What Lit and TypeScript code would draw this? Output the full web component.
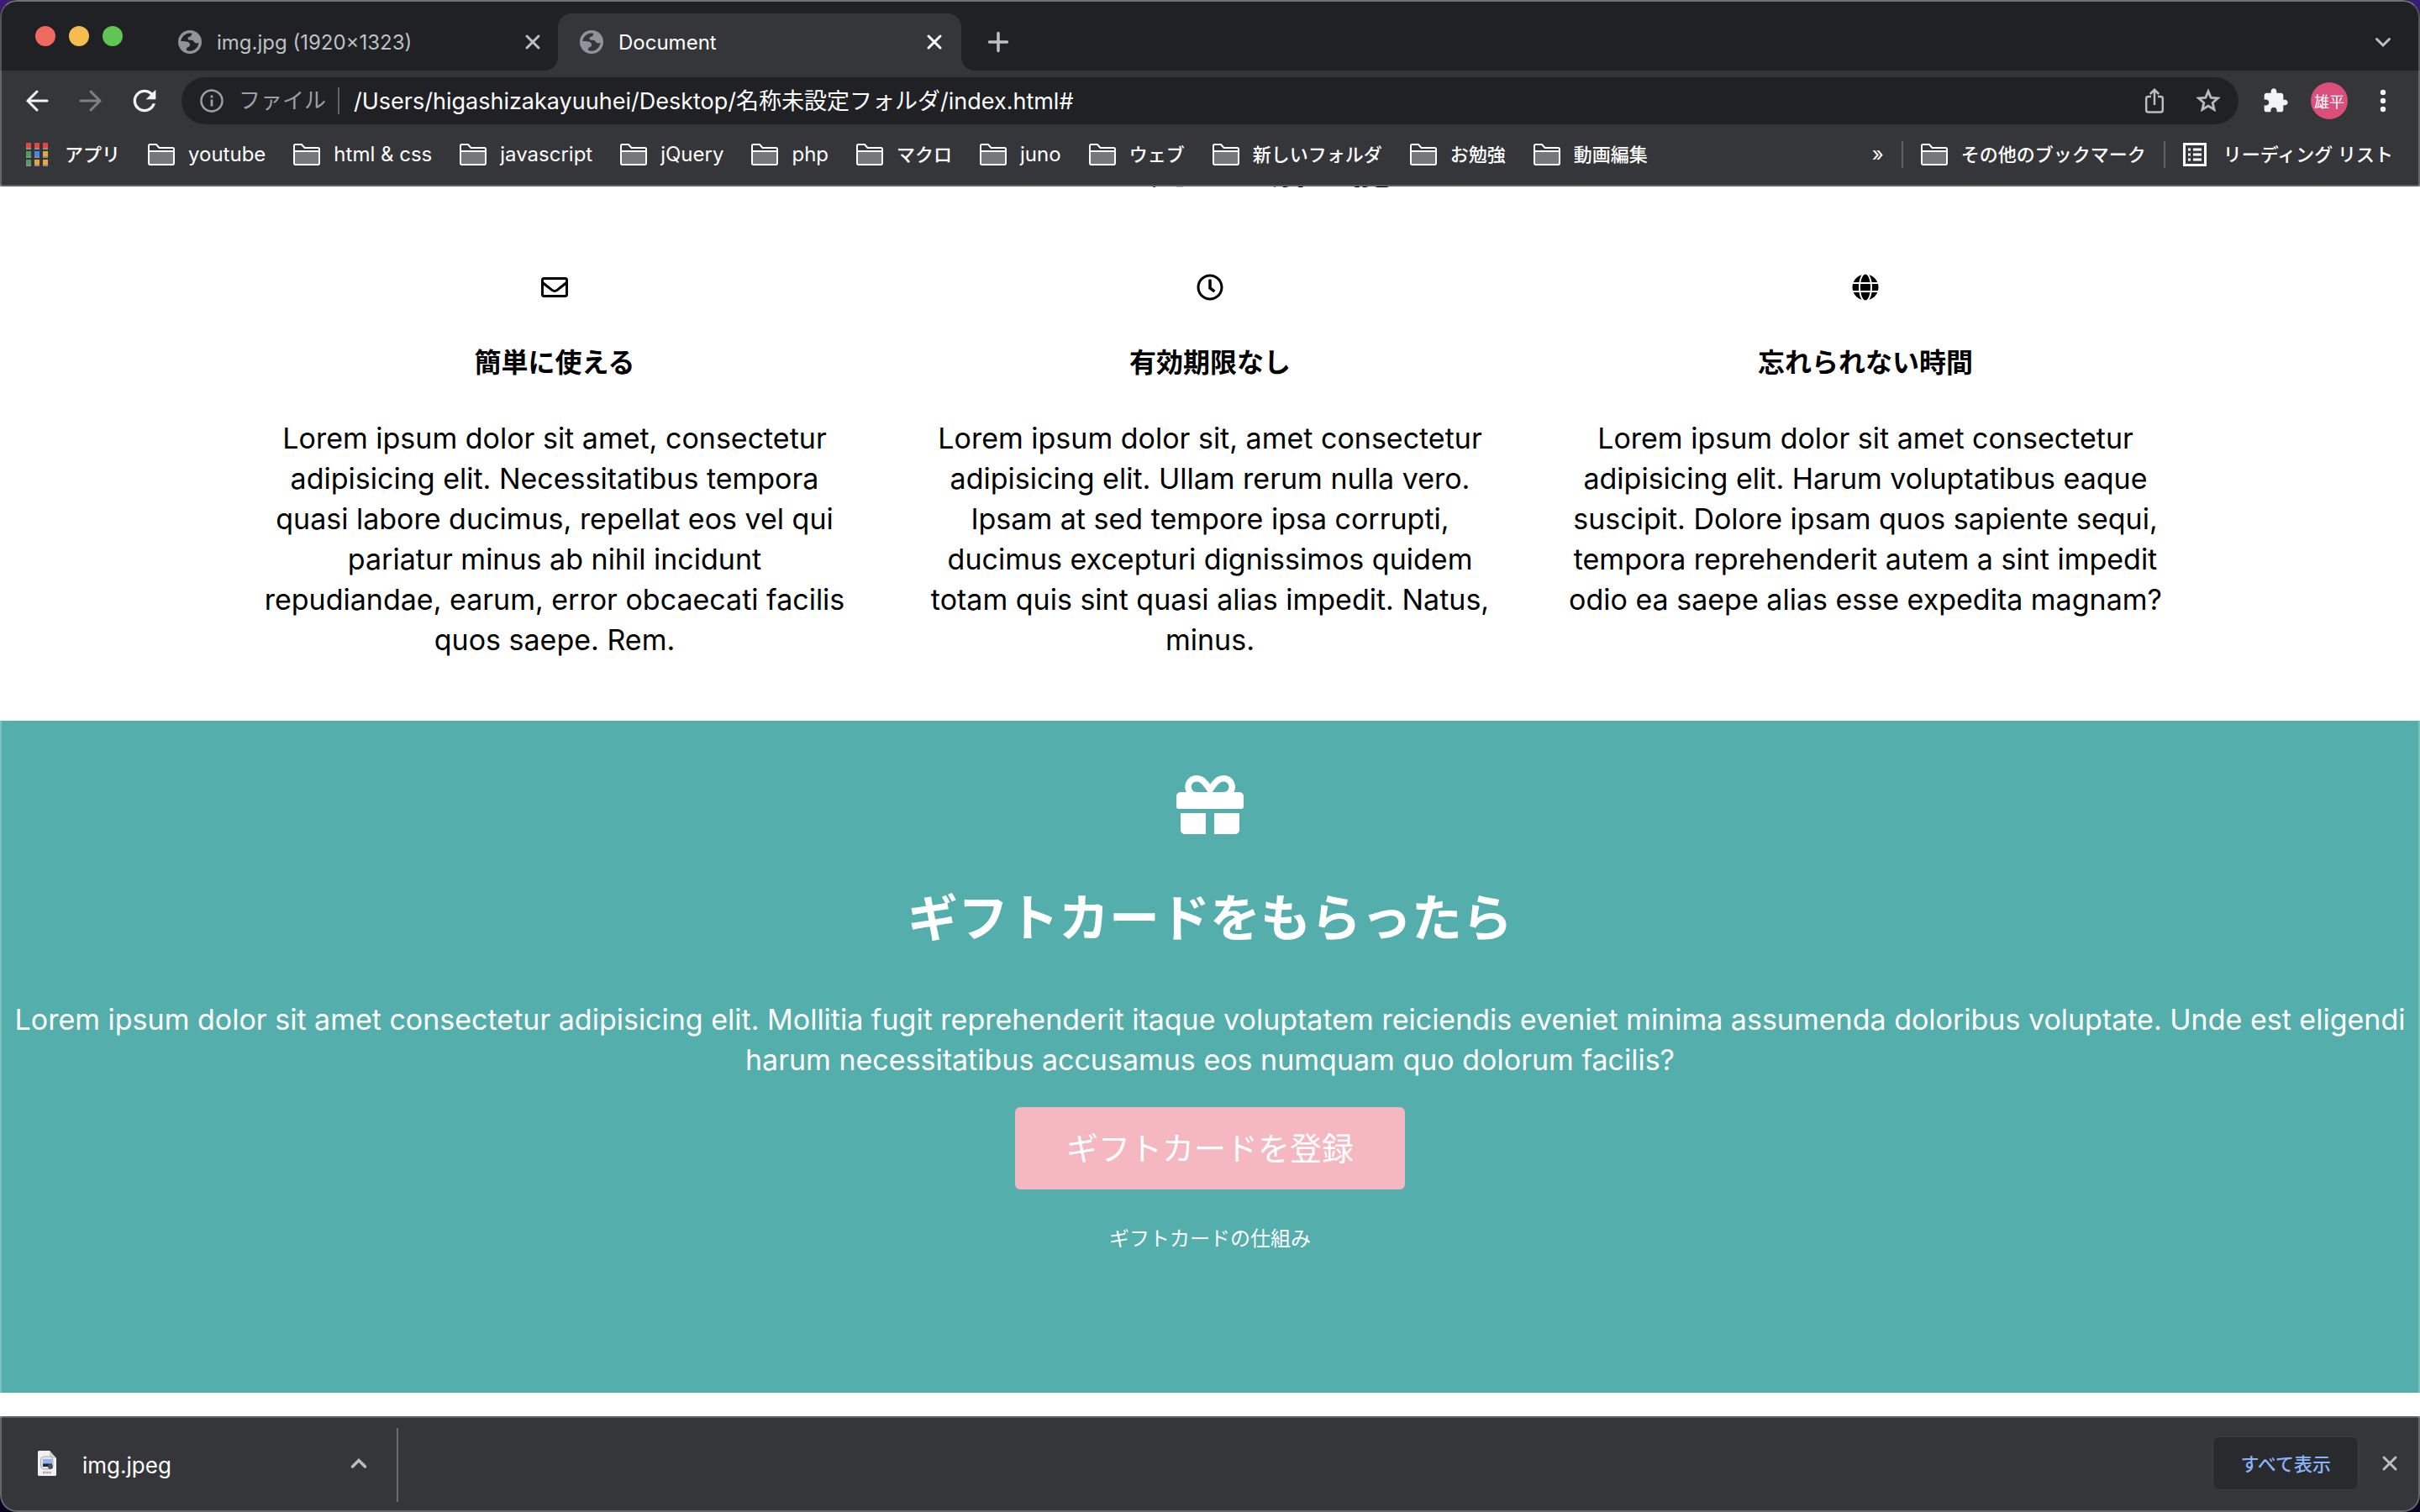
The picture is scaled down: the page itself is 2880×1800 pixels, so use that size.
import { LitElement, html, css, svg } from "lit";
import { customElement } from "lit/decorators.js";

interface Bookmark {
  label: string;
  ja: boolean;
}

const bookmarks: Bookmark[] = [
  { label: "youtube", ja: false },
  { label: "html & css", ja: false },
  { label: "javascript", ja: false },
  { label: "jQuery", ja: false },
  { label: "php", ja: false },
  { label: "マクロ", ja: true },
  { label: "juno", ja: false },
  { label: "ウェブ", ja: true },
  { label: "新しいフォルダ", ja: true },
  { label: "お勉強", ja: true },
  { label: "動画編集", ja: true },
];

const envelope = svg`<path d="M464 64H48C21.49 64 0 85.49 0 112v288c0 26.51 21.49 48 48 48h416c26.51 0 48-21.49 48-48V112c0-26.51-21.49-48-48-48zm0 48v40.805c-22.422 18.259-58.168 46.651-134.587 106.49-16.841 13.247-50.201 45.072-73.413 44.701-23.208.375-56.579-31.459-73.413-44.701C106.18 199.465 70.425 171.067 48 152.805V112h416zM48 400V214.398c22.914 18.251 55.409 43.862 104.938 82.646 21.857 17.205 60.134 55.186 103.062 54.955 42.717.231 80.509-37.199 103.053-54.947 49.528-38.783 82.032-64.401 104.947-82.653V400H48z"/>`;
const clock = svg`<path d="M256 8C119 8 8 119 8 256s111 248 248 248 248-111 248-248S393 8 256 8zm0 448c-110.5 0-200-89.5-200-200S145.5 56 256 56s200 89.5 200 200-89.5 200-200 200zm61.8-104.4l-84.9-61.7c-3.1-2.3-4.9-5.9-4.9-9.7V116c0-6.6 5.4-12 12-12h32c6.6 0 12 5.4 12 12v141.7l66.8 48.6c5.4 3.9 6.5 11.4 2.6 16.8L334.6 349c-3.9 5.3-11.4 6.5-16.8 2.6z"/>`;
const globe = svg`<path transform="translate(8 0)" d="M336.5 160C322 70.7 287.8 8 248 8s-74 62.7-88.5 152h177zM152 256c0 22.2 1.2 43.5 3.3 64h185.3c2.1-20.5 3.3-41.8 3.3-64s-1.2-43.5-3.3-64H155.3c-2.1 20.5-3.3 41.8-3.3 64zm324.7-96c-28.6-67.9-86.5-120.4-158-141.6 24.4 33.8 41.2 84.7 50 141.6h108zM177.2 18.4C105.8 39.6 47.8 92.1 19.3 160h108c8.7-56.9 25.5-107.8 49.9-141.6zM487.4 192H372.7c2.1 21 3.3 42.5 3.3 64s-1.2 43-3.3 64h114.6c5.5-20.5 8.6-41.8 8.6-64s-3.1-43.5-8.5-64zM120 256c0-21.5 1.2-43 3.3-64H8.6C3.2 212.5 0 233.8 0 256s3.2 43.5 8.6 64h114.6c-2-21-3.2-42.5-3.2-64zm39.5 96c14.5 89.3 48.7 152 88.5 152s74-62.7 88.5-152h-177zm159.3 141.6c71.4-21.2 129.4-73.7 158-141.6h-108c-8.8 56.9-25.6 107.8-50 141.6zM19.3 352c28.6 67.9 86.5 120.4 158 141.6-24.4-33.8-41.2-84.7-50-141.6h-108z"/>`;

const features = [
  {
    icon: envelope,
    title: "簡単に使える",
    text: "Lorem ipsum dolor sit amet, consectetur adipisicing elit. Necessitatibus tempora quasi labore ducimus, repellat eos vel qui pariatur minus ab nihil incidunt repudiandae, earum, error obcaecati facilis quos saepe. Rem.",
  },
  {
    icon: clock,
    title: "有効期限なし",
    text: "Lorem ipsum dolor sit, amet consectetur adipisicing elit. Ullam rerum nulla vero. Ipsam at sed tempore ipsa corrupti, ducimus excepturi dignissimos quidem totam quis sint quasi alias impedit. Natus, minus.",
  },
  {
    icon: globe,
    title: "忘れられない時間",
    text: "Lorem ipsum dolor sit amet consectetur adipisicing elit. Harum voluptatibus eaque suscipit. Dolore ipsam quos sapiente sequi, tempora reprehenderit autem a sint impedit odio ea saepe alias esse expedita magnam?",
  },
];

const favicon = html`<svg class="favicon" viewBox="0 0 28 28" aria-hidden="true">
  <circle cx="14" cy="14" r="14" fill="#8f949a" />
  <path d="M13 3.5C8 4 4 8 3.2 13c3 0 6.800.2 9 1.200 1.800.8 2 2.300 1.800 3.800-.2 1.500-1.700 1.800-3 2.500-1.200.7-1.200 2.300-.8 3.600 7.500 2.400 14-2.600 14.300-9.600-1.600 1.500-3.700 1.200-5-.1-1.200-1.300-1.500-2.500-3.600-2.600-1.900 0-4.200 0-4.400-1.900-.2-1.700 1.600-2 3-2.400 1.400-.5 1-2.300 2.200-3.200 0-.4-1.500-1-3.700-.8z" fill="var(--tab-bg)" />
</svg>`;

const cross = html`<svg class="cross" viewBox="0 0 24 24" aria-hidden="true">
  <path d="M5 5l14 14M19 5L5 19" fill="none" stroke="currentColor" stroke-width="3" stroke-linecap="round" />
</svg>`;

const folder = html`<svg class="folder" viewBox="0 0 32 26" aria-hidden="true">
  <path d="M2 9h28v15H2z" fill="#76777a" />
  <path d="M1 23V2.500Q1 1 2.500 1H10l3.500 4H29.500Q31 5 31 6.500V23Q31 25 29.500 25H2.500Q1 25 1 23z" fill="none" stroke="#fff" stroke-width="2" />
  <path d="M1 9h30" stroke="#fff" stroke-width="2" />
</svg>`;

@customElement("app-root")
export class AppRoot extends LitElement {
  static styles = css`
    :host {
      display: block;
      background: linear-gradient(#3b1a78, #0a0220);
      font-family: Inter, "Noto Sans CJK JP", sans-serif;
      color: #fff;
    }
    * {
      box-sizing: border-box;
    }
    button {
      display: flex;
      align-items: center;
      justify-content: center;
      margin: 0;
      padding: 0;
      border: 0;
      background: none;
      color: inherit;
      font: inherit;
    }
    svg {
      display: block;
      flex: none;
    }
    a {
      color: inherit;
      text-decoration: none;
    }
    .window {
      position: relative;
      display: flex;
      flex-direction: column;
      height: 100vh;
      overflow: hidden;
      border-radius: 20px;
      background: #35363a;
    }
    .window::after {
      content: "";
      position: absolute;
      inset: 0;
      border: 2px solid rgba(255, 255, 255, 0.24);
      border-top-color: rgba(255, 255, 255, 0.36);
      border-radius: 20px;
      pointer-events: none;
    }
    .icon-button {
      width: 40px;
      height: 40px;
      flex: none;
    }

    .tabs {
      display: flex;
      height: 84px;
      padding-right: 24px;
      background: #202124;
      font-size: 24px;
      flex: none;
    }
    .lights {
      display: flex;
      gap: 16px;
      width: 186px;
      padding: 31px 0 0 42px;
    }
    .light {
      width: 24px;
      height: 24px;
      border-radius: 50%;
    }
    .red {
      background: #ee6a5f;
    }
    .yellow {
      background: #f5bd4f;
    }
    .green {
      background: #61c554;
    }
    .tab {
      --tab-bg: #202124;
      display: flex;
      align-items: center;
      width: 480px;
      height: 68px;
      margin-top: 16px;
      padding: 0 20px 0 26px;
      background: var(--tab-bg);
      color: #bdc1c6;
    }
    .tab.active {
      --tab-bg: #35363a;
      position: relative;
      margin-left: -2px;
      border-radius: 16px 16px 0 0;
      color: #fff;
    }
    .tab.active::before,
    .tab.active::after {
      content: "";
      position: absolute;
      bottom: 0;
      width: 16px;
      height: 16px;
    }
    .tab.active::before {
      right: 100%;
      background: radial-gradient(circle at 0 0, transparent 16px, #35363a 16px);
    }
    .tab.active::after {
      left: 100%;
      background: radial-gradient(circle at 100% 0, transparent 16px, #35363a 16px);
    }
    .favicon {
      width: 28px;
      height: 28px;
      margin-right: 18px;
    }
    .tab-title {
      flex: 1;
    }
    .cross {
      width: 24px;
      height: 24px;
    }
    .new-tab {
      margin: 30px auto 0 24px;
      color: #bdc1c6;
    }
    .tab-search {
      margin-top: 30px;
      color: #bdc1c6;
    }

    .toolbar {
      display: flex;
      align-items: center;
      gap: 24px;
      height: 72px;
      padding: 0 24px;
      flex: none;
      color: #f1f3f4;
    }
    .forward {
      color: #7f8083;
    }
    .address {
      display: flex;
      align-items: center;
      flex: 1;
      height: 56px;
      padding: 0 16px 0 22px;
      border-radius: 28px;
      background: #202124;
      color: #9aa0a6;
    }
    .info {
      width: 28px;
      height: 28px;
      margin-right: 18px;
    }
    .scheme {
      padding-right: 14px;
      margin-right: 17px;
      border-right: 2px solid #5f6368;
      font-size: 26px;
      line-height: 32px;
    }
    .url {
      flex: 1;
      min-width: 0;
      padding: 0 0 4px;
      border: 0;
      outline: 0;
      background: none;
      color: #fff;
      font: inherit;
      font-size: 27px;
    }
    .address-actions {
      display: flex;
      gap: 24px;
      color: #bdbdbd;
    }
    .menu {
      display: flex;
      align-items: center;
      gap: 22px;
    }
    .avatar {
      width: 44px;
      height: 44px;
      border-radius: 50%;
      background: #db4f7a;
      color: #fff;
      font-size: 18px;
    }

    .bookmarks {
      display: flex;
      align-items: center;
      gap: 33px;
      height: 66px;
      padding: 0 32px 8px 31px;
      border-bottom: 2px solid #5e5f63;
      flex: none;
      font-size: 24px;
      line-height: 32px;
      white-space: nowrap;
    }
    .bookmark {
      display: flex;
      align-items: center;
      gap: 16px;
    }
    .ja {
      font-size: 22px;
      font-weight: 500;
    }
    .apps {
      gap: 20px;
    }
    .apps-icon {
      width: 26px;
      height: 28px;
    }
    .folder {
      width: 32px;
      height: 26px;
    }
    .others {
      display: flex;
      align-items: center;
      gap: 21px;
      margin-left: auto;
    }
    .divider {
      width: 2px;
      height: 32px;
      background: #5f6368;
    }
    .list-icon {
      width: 28px;
      height: 28px;
    }
    .reading {
      gap: 20px;
    }

    .page {
      flex: 1;
      min-height: 0;
      overflow: hidden;
      background: #fff;
      color: #000;
      font-size: 34px;
      line-height: 48px;
      text-align: center;
    }
    h2,
    h3,
    p {
      margin: 0;
    }
    .intro-title {
      margin-top: -51px;
      font-size: 48px;
      line-height: 60px;
      font-weight: 700;
    }
    .features {
      display: grid;
      grid-template-columns: repeat(3, 1fr);
      max-width: 2340px;
      margin: 0 auto;
      padding: 95px 0 72px;
    }
    .feature {
      padding: 0 35px;
    }
    .feature-icon {
      width: 32px;
      height: 32px;
      margin: 0 auto 50px;
    }
    .feature-title {
      margin-bottom: 42px;
      font-size: 32px;
      font-weight: 700;
    }
    .gift {
      display: flex;
      flex-direction: column;
      align-items: center;
      padding: 60px 16px 165px;
      background: #54aeab;
      color: #fff;
    }
    .gift-icon {
      width: 80px;
      height: 80px;
    }
    .gift-title {
      margin: 50px 0 52px;
      font-size: 60px;
      line-height: 90px;
      font-weight: 700;
    }
    .register {
      height: 98px;
      margin: 32px 0 41px;
      padding: 0 61px;
      border-radius: 6px;
      background: #f5b8c1;
      font-size: 38px;
    }
    .how {
      font-size: 24px;
      line-height: 36px;
    }

    .downloads {
      display: flex;
      align-items: center;
      height: 114px;
      padding-right: 22px;
      border-top: 2px solid #5e5f63;
      flex: none;
      font-size: 26px;
    }
    .download {
      display: flex;
      align-items: center;
      width: 474px;
      height: 88px;
      padding: 0 33px 4px 45px;
      border-right: 2px solid #6b6c70;
    }
    .file-icon {
      width: 22px;
      height: 30px;
      margin-right: 31px;
    }
    .file-name {
      flex: 1;
      padding-top: 4px;
      text-align: left;
    }
    .show-all {
      height: 64px;
      margin: 0 23px 4px auto;
      padding: 0 32px 2px;
      border: 1px solid #3f4044;
      border-radius: 8px;
      background: #292a2d;
      color: #8ab4f8;
      font-size: 22px;
      font-weight: 500;
    }
    .close-bar {
      margin-bottom: 4px;
      width: 28px;
      color: #bdbdbd;
    }
  `;

  render() {
    return html`
      <div class="window">
        <header class="tabs">
          <div class="lights">
            <span class="light red"></span><span class="light yellow"></span><span class="light green"></span>
          </div>
          <div class="tab">
            ${favicon}<span class="tab-title">img.jpg (1920×1323)</span>
            <button aria-label="タブを閉じる">${cross}</button>
          </div>
          <div class="tab active">
            ${favicon}<span class="tab-title">Document</span>
            <button aria-label="タブを閉じる">${cross}</button>
          </div>
          <button class="icon-button new-tab" aria-label="新しいタブ">
            <svg width="28" height="28" viewBox="0 0 28 28">
              <path d="M14 3.500v21M3.500 14h21" stroke="currentColor" stroke-width="3.500" stroke-linecap="round" />
            </svg>
          </button>
          <button class="icon-button tab-search" aria-label="タブを検索">
            <svg width="24" height="24" viewBox="0 0 24 24">
              <path d="M4.500 8.500l7.500 7.500 7.500-7.500" fill="none" stroke="currentColor" stroke-width="3" stroke-linecap="round" />
            </svg>
          </button>
        </header>

        <nav class="toolbar">
          <button class="icon-button" aria-label="戻る">
            <svg width="28" height="28" viewBox="0 0 28 28">
              <path d="M26 14H3M14 3L3 14l11 11" fill="none" stroke="currentColor" stroke-width="3" stroke-linecap="round" />
            </svg>
          </button>
          <button class="icon-button forward" aria-label="進む">
            <svg width="28" height="28" viewBox="0 0 28 28">
              <path d="M2 14h23M14 3l11 11-11 11" fill="none" stroke="currentColor" stroke-width="3" stroke-linecap="round" />
            </svg>
          </button>
          <button class="icon-button" aria-label="再読み込み">
            <svg width="40" height="40" viewBox="0 0 24 24" fill="currentColor">
              <path d="M17.65 6.35C16.2 4.9 14.21 4 12 4c-4.42 0-7.99 3.58-7.99 8s3.57 8 7.99 8c3.73 0 6.84-2.55 7.73-6h-2.08c-.82 2.33-3.04 4-5.65 4-3.31 0-6-2.69-6-6s2.69-6 6-6c1.66 0 3.14.69 4.22 1.78L13 11h7V4l-2.35 2.35z" />
            </svg>
          </button>
          <div class="address">
            <svg class="info" viewBox="0 0 28 28" aria-hidden="true">
              <circle cx="14" cy="14" r="12.500" fill="none" stroke="currentColor" stroke-width="2.500" />
              <path d="M14 12.500v8M14 7.500v3" stroke="currentColor" stroke-width="2.800" />
            </svg>
            <label class="scheme" for="url">ファイル</label>
            <input class="url" id="url" type="text" value="/Users/higashizakayuuhei/Desktop/名称未設定フォルダ/index.html#" />
            <div class="address-actions">
              <button class="icon-button" aria-label="共有">
                <svg width="28" height="32" viewBox="0 0 28 32" fill="none" stroke="currentColor" stroke-width="2.500">
                  <path d="M10 11H6.500Q4.200 11 4.200 13.300V27Q4.200 29.500 6.500 29.500h15q2.300 0 2.300-2.500V13.300Q23.800 11 21.500 11H18M14 21V3M8.800 8L14 2.800 19.200 8" />
                </svg>
              </button>
              <button class="icon-button" aria-label="ブックマークに追加">
                <svg width="34" height="34" viewBox="0 0 24 24" fill="currentColor" stroke="currentColor" stroke-width=".4">
                  <path d="M22 9.24l-7.190-.62L12 2 9.190 8.630 2 9.240l5.460 4.730L5.820 21 12 17.270 18.180 21l-1.630-7.030L22 9.240zM12 15.400l-3.760 2.270 1-4.280-3.320-2.880 4.380-.38L12 6.100l1.710 4.040 4.380.38-3.320 2.880 1 4.280L12 15.400z" />
                </svg>
              </button>
            </div>
          </div>
          <div class="menu">
            <button class="icon-button" aria-label="拡張機能">
              <svg width="32" height="32" viewBox="0 0 24 24" fill="currentColor">
                <path d="M20.5 11H19V7c0-1.1-.9-2-2-2h-4V3.5C13 2.12 11.88 1 10.5 1S8 2.12 8 3.5V5H4c-1.1 0-1.99.9-1.99 2v3.8H3.5c1.49 0 2.7 1.21 2.7 2.7s-1.21 2.7-2.7 2.7H2V20c0 1.1.9 2 2 2h3.8v-1.5c0-1.49 1.21-2.7 2.7-2.7 1.49 0 2.7 1.21 2.7 2.7V22H17c1.1 0 2-.9 2-2v-4h1.500c1.380 0 2.500-1.120 2.500-2.500S21.880 11 20.500 11z" />
              </svg>
            </button>
            <button class="avatar">雄平</button>
            <button class="icon-button" aria-label="メニュー">
              <svg width="8" height="28" viewBox="0 0 8 28" fill="currentColor">
                <circle cx="4" cy="4" r="3.200" /><circle cx="4" cy="14" r="3.200" /><circle cx="4" cy="24" r="3.200" />
              </svg>
            </button>
          </div>
        </nav>

        <nav class="bookmarks">
          <a class="bookmark apps ja" href="#">
            <svg class="apps-icon" viewBox="0 0 26 28" aria-hidden="true">
              <g fill="#8d8e90"><path d="M0 6h6v2H0zM10 6h6v2h-6zM20 6h6v2h-6zM0 16h6v2H0zM10 16h6v2h-6zM20 16h6v2h-6zM0 26h6v2H0zM10 26h6v2h-6zM20 26h6v2h-6z" /></g>
              <path d="M0 0h6v6H0zM10 0h6v6h-6zM20 0h6v6h-6z" fill="#e8453c" />
              <path d="M0 10h6v6H0zM0 20h6v6H0z" fill="#4f9d5b" />
              <path d="M10 10h6v6h-6z" fill="#4285f4" />
              <path d="M20 10h6v6h-6zM10 20h6v6h-6zM20 20h6v6h-6z" fill="#e8a638" />
            </svg>
            アプリ
          </a>
          ${bookmarks.map(
            (b) => html`<a class="bookmark ${b.ja ? "ja" : ""}" href="#">${folder}${b.label}</a>`
          )}
          <div class="others">
            <button aria-label="その他">»</button>
            <span class="divider"></span>
            <a class="bookmark ja" href="#">${folder}その他のブックマーク</a>
            <span class="divider"></span>
            <a class="bookmark reading ja" href="#">
              <svg class="list-icon" viewBox="0 0 28 28" fill="none" stroke="#fff" aria-hidden="true">
                <rect x="1.500" y="1.500" width="25" height="25" stroke-width="3" />
                <path d="M6 8h3M6 14h3M6 20h3M12 8h10M12 14h10M12 20h10" stroke-width="2.800" />
              </svg>
              リーディング リスト
            </a>
          </div>
        </nav>

        <main class="page">
          <h2 class="intro-title">ギフト完全な解い能</h2>
          <div class="features">
            ${features.map(
              (f) => html`<section class="feature">
                <svg class="feature-icon" viewBox="0 0 512 512" aria-hidden="true">${f.icon}</svg>
                <h3 class="feature-title">${f.title}</h3>
                <p>${f.text}</p>
              </section>`
            )}
          </div>
          <section class="gift">
            <svg class="gift-icon" viewBox="0 0 512 512" fill="currentColor" aria-hidden="true">
              <path d="M32 448c0 17.7 14.3 32 32 32h160V320H32v128zm256 32h160c17.7 0 32-14.3 32-32V320H288v160zm192-320h-42.1c6.2-12.1 10.1-25.5 10.1-40 0-48.5-39.5-88-88-88-41.6 0-68.5 21.3-103 68.3-34.5-47-61.4-68.3-103-68.3-48.5 0-88 39.5-88 88 0 14.5 3.8 27.9 10.1 40H32c-17.7 0-32 14.3-32 32v80c0 8.8 7.2 16 16 16h480c8.8 0 16-7.2 16-16v-80c0-17.7-14.3-32-32-32zm-326.1 0c-22.1 0-40-17.9-40-40s17.9-40 40-40c19.9 0 34.6 3.3 86.1 80h-86.1zm206.1 0h-86.1c51.4-76.5 65.700-80 86.100-80 22.100 0 40 17.900 40 40s-17.900 40-40 40z" />
            </svg>
            <h2 class="gift-title">ギフトカードをもらったら</h2>
            <p>
              Lorem ipsum dolor sit amet consectetur adipisicing elit. Mollitia fugit reprehenderit itaque voluptatem
              reiciendis eveniet minima assumenda doloribus voluptate. Unde est eligendi harum necessitatibus accusamus
              eos numquam quo dolorum facilis?
            </p>
            <button class="register">ギフトカードを登録</button>
            <a class="how" href="#">ギフトカードの仕組み</a>
          </section>
        </main>

        <footer class="downloads">
          <button class="download">
            <svg class="file-icon" viewBox="0 0 22 30" aria-hidden="true">
              <path d="M1.500 0H14l8 9v19.500Q22 30 20.500 30h-19Q0 30 0 28.500v-27Q0 0 1.500 0z" fill="#f1f1f1" />
              <path d="M14 0l8 9h-6.500Q14 9 14 7.500z" fill="#cfcfcf" />
              <rect x="3.500" y="7" width="14.500" height="15" rx="4" fill="#e2e4e6" stroke="#a9adb1" />
              <path d="M6 10h11v6H6z" fill="#8fb4ee" />
              <path d="M6 15.500h11v3.500H6z" fill="#1d2733" />
              <circle cx="15" cy="19" r="3" fill="#4a545f" />
              <path d="M6 26h10" stroke="#a5a5a5" stroke-width="2.500" stroke-dasharray="2 .6" />
            </svg>
            <span class="file-name">img.jpeg</span>
            <svg width="24" height="24" viewBox="0 0 24 24" aria-hidden="true">
              <path d="M4.500 16l7.500-7.500 7.500 7.500" fill="none" stroke="#bdbdbd" stroke-width="3.500" stroke-linecap="round" />
            </svg>
          </button>
          <button class="show-all">すべて表示</button>
          <button class="close-bar" aria-label="閉じる">${cross}</button>
        </footer>
      </div>
    `;
  }
}
